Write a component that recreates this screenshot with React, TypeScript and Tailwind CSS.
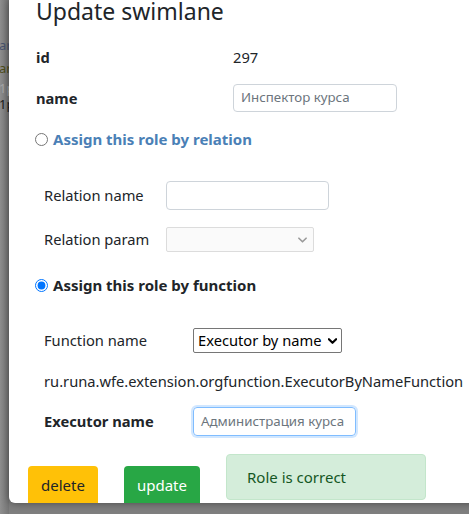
import React from "react";

const font = { fontFamily: '"Noto Sans", "Open Sans", sans-serif' };

function Chevron({ className }: { className?: string }) {
  return (
    <svg viewBox="0 0 10 6" className={className} fill="none" stroke="currentColor" strokeWidth="1.8" strokeLinecap="round" strokeLinejoin="round">
      <path d="M1 1l4 4 4-4" />
    </svg>
  );
}

export default function App() {
  return (
    <div className="flex h-[514px] w-[469px] overflow-hidden bg-[#7f7f7f] text-[14.7px] text-[#212529]" style={font}>
      {/* covered page behind the overlay */}
      <div className="flex w-[9px] shrink-0 flex-col overflow-hidden bg-gradient-to-r from-[#8f8f8f] to-[#757575] pt-[38px] text-[13px] leading-[15px]">
        <span className="-ml-[1px] whitespace-nowrap text-[#4a5570]">ar</span>
        <span className="-ml-[1px] mt-[8px] whitespace-nowrap text-[#4f4f1c]">ar</span>
        <span className="-ml-[1px] mt-[5px] whitespace-nowrap text-[#a9a9a9]">1p</span>
        <span className="-ml-[1px] mt-[1px] whitespace-nowrap text-[#1c1c1c]">1p</span>
      </div>

      <div className="h-[503px] w-[520px] shrink-0 overflow-hidden rounded-bl-[6px] bg-white pl-[27px] shadow-[0_0_8px_rgba(0,0,0,0.45)]">
        <div className="flex h-[24px] items-center text-[23px] leading-none">
          <span className="-mt-[1px]">Update swimlane</span>
        </div>

        <div className="mt-[19px] flex h-[28px] items-center">
          <span className="w-[197px] font-bold">id</span>
          <span>297</span>
        </div>

        <div className="mt-[13px] flex h-[28px] items-center">
          <span className="w-[197px] font-bold">name</span>
          <div className="flex h-[28px] w-[164px] items-center whitespace-nowrap rounded-[4px] border border-[#ced4da] px-[7px] text-[13.3px] text-[#6c757d]">
            Инспектор курса
          </div>
        </div>

        <label className="-ml-[1px] mt-[15px] flex h-[24px] items-center gap-[5px] text-[15px] font-bold text-[#4a80b6]">
          <input type="radio" name="mode" className="m-0 h-[13px] w-[13px]" />
          <span>Assign this role by relation</span>
        </label>

        <div className="ml-[8px]">
          <div className="mt-[30px] flex h-[29px] items-center">
            <span className="w-[122px]">Relation name</span>
            <div className="h-[29px] w-[163px] rounded-[4px] border border-[#ced4da]" />
          </div>
          <div className="mt-[17px] flex h-[25px] items-center">
            <span className="w-[122px]">Relation param</span>
            <div className="flex h-[25px] w-[148px] items-center justify-end rounded-[2px] border border-[#dcdcdc] bg-[#fafafa] pr-[6px] text-[#9a9a9a]">
              <Chevron className="h-[6px] w-[9px]" />
            </div>
          </div>
        </div>

        <label className="-ml-[1px] mt-[21px] flex h-[24px] items-center gap-[5px] text-[15px] font-bold">
          <input type="radio" name="mode" defaultChecked className="m-0 h-[13px] w-[13px] accent-[#0075ff]" />
          <span>Assign this role by function</span>
        </label>

        <div className="ml-[8px]">
          <div className="mt-[31px] flex h-[25px] items-center">
            <span className="w-[149px]">Function name</span>
            <div className="flex h-[25px] w-[149px] items-center justify-between whitespace-nowrap rounded-[2px] border border-[#767676] pl-[4px] pr-[4px] text-black">
              <span>Executor by name</span>
              <Chevron className="h-[6px] w-[9px] [stroke-width:2.4]" />
            </div>
          </div>
          <div className="mt-[16px] flex h-[24px] items-center whitespace-nowrap">
            ru.runa.wfe.extension.orgfunction.ExecutorByNameFunction
          </div>
          <div className="mt-[14px] flex h-[29px] items-center">
            <span className="w-[149px] font-bold">Executor name</span>
            <div className="flex h-[29px] w-[163px] items-center overflow-hidden whitespace-nowrap rounded-[4px] border border-[#80bdff] px-[7px] text-[13.3px] text-[#6c757d] shadow-[0_0_0_2px_rgba(0,123,255,0.18)]">
              Администрация курса
            </div>
          </div>
        </div>

        <div className="-ml-[8px] mt-[18px] flex items-start">
          <button className="mt-[12px] h-[40px] w-[70px] rounded-[4px] bg-[#ffc107] pb-[2px] text-[15px] text-[#212529]">
            delete
          </button>
          <button className="ml-[26px] mt-[12px] h-[40px] w-[76px] rounded-[4px] bg-[#28a745] pb-[2px] text-[15px] text-white">
            update
          </button>
          <div className="ml-[26px] flex h-[46px] w-[200px] items-center rounded-[4px] border border-[#c3e6cb] bg-[#d4edda] pl-[20px] text-[15px] text-[#155724]">
            Role is correct
          </div>
        </div>
      </div>
    </div>
  );
}
